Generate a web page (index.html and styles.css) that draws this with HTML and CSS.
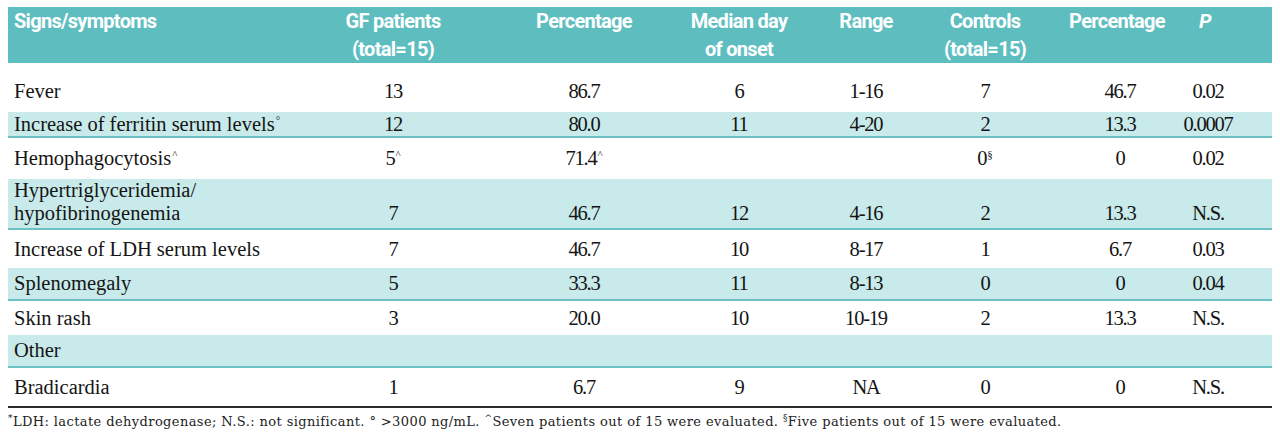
FILE: index.html
```html
<!DOCTYPE html>
<html lang="en">
<head>
<meta charset="utf-8">
<title>Signs and symptoms</title>
<link rel="stylesheet" href="styles.css">
</head>
<body>
<div class="page">
  <table class="data">
    <colgroup>
      <col class="w1"><col class="w2"><col class="w3"><col class="w4">
      <col class="w5"><col class="w6"><col class="w7"><col class="w8">
    </colgroup>
    <thead>
      <tr>
        <th class="lab">Signs/symptoms</th>
        <th>GF patients<br>(total=15)</th>
        <th class="c3">Percentage</th>
        <th>Median day<br>of onset</th>
        <th class="c5">Range</th>
        <th>Controls<br>(total=15)</th>
        <th class="c7">Percentage</th>
        <th class="c8"><i>P</i></th>
      </tr>
    </thead>
    <tbody>
      <tr class="first">
        <td class="lab">Fever</td><td>13</td><td class="c3">86.7</td><td>6</td><td class="c5">1-16</td><td>7</td><td class="c7">46.7</td><td class="c8">0.02</td>
      </tr>
      <tr class="sh r2">
        <td class="lab">Increase of ferritin serum levels<sup>°</sup></td><td>12</td><td class="c3">80.0</td><td>11</td><td class="c5">4-20</td><td>2</td><td class="c7">13.3</td><td class="c8">0.0007</td>
      </tr>
      <tr class="r3">
        <td class="lab">Hemophagocytosis<sup>^</sup></td><td>5<sup>^</sup></td><td class="c3">71.4<sup>^</sup></td><td></td><td class="c5"></td><td>0<sup>§</sup></td><td class="c7">0</td><td class="c8">0.02</td>
      </tr>
      <tr class="sh r4">
        <td class="lab">Hypertriglyceridemia/<br>hypofibrinogenemia</td><td>7</td><td class="c3">46.7</td><td>12</td><td class="c5">4-16</td><td>2</td><td class="c7">13.3</td><td class="c8">N.S.</td>
      </tr>
      <tr class="r5">
        <td class="lab">Increase of LDH serum levels</td><td>7</td><td class="c3">46.7</td><td>10</td><td class="c5">8-17</td><td>1</td><td class="c7">6.7</td><td class="c8">0.03</td>
      </tr>
      <tr class="sh r6">
        <td class="lab">Splenomegaly</td><td>5</td><td class="c3">33.3</td><td>11</td><td class="c5">8-13</td><td>0</td><td class="c7">0</td><td class="c8">0.04</td>
      </tr>
      <tr class="r7">
        <td class="lab">Skin rash</td><td>3</td><td class="c3">20.0</td><td>10</td><td class="c5">10-19</td><td>2</td><td class="c7">13.3</td><td class="c8">N.S.</td>
      </tr>
      <tr class="sh r8">
        <td class="lab">Other</td><td></td><td class="c3"></td><td></td><td class="c5"></td><td></td><td class="c7"></td><td class="c8"></td>
      </tr>
      <tr class="last">
        <td class="lab">Bradicardia</td><td>1</td><td class="c3">6.7</td><td>9</td><td class="c5">NA</td><td>0</td><td class="c7">0</td><td class="c8">N.S.</td>
      </tr>
    </tbody>
  </table>
  <p class="note"><sup>*</sup>LDH: lactate dehydrogenase; N.S.: not significant. ° &gt;3000 ng/mL. <sup>^</sup>Seven patients out of 15 were evaluated. <sup>§</sup>Five patients out of 15 were evaluated.</p>
</div>
</body>
</html>
```

FILE: styles.css
```css
html, body {
  margin: 0;
  padding: 0;
  background: #ffffff;
}

.page {
  padding: 7px 8px 0 8px;
}

.data {
  width: 1264px;
  table-layout: fixed;
  border-collapse: separate;
  border-spacing: 0;
  font-family: "Liberation Serif", "Times New Roman", serif;
  font-size: 20.5px;
  line-height: 23px;
  color: #151515;
}

.w1 { width: 322px; }
.w2 { width: 126px; }
.w3 { width: 234px; }
.w4 { width: 98px; }
.w5 { width: 152px; }
.w6 { width: 90px; }
.w7 { width: 150px; }
.w8 { width: 92px; }

.data th,
.data td {
  box-sizing: border-box;
  padding: 0;
  text-align: center;
  white-space: nowrap;
}

.data th {
  height: 54px;
  background: #5ebebf;
  color: #ffffff;
  font-family: Roboto, "Liberation Sans", sans-serif;
  font-weight: 700;
  font-size: 20px;
  letter-spacing: -0.7px;
  line-height: 28px;
  vertical-align: top;
  padding-top: 0;
}

.data th i {
  font-style: italic;
}

.data td {
  vertical-align: middle;
  letter-spacing: -1.2px;
}

.data .lab {
  text-align: left;
  padding-left: 6px;
  letter-spacing: 0;
}

.data th.lab {
  letter-spacing: -0.7px;
}

.data .c3 { padding-left: 22px; }
.data .c5 { padding-left: 4px; }
.data .c7 { padding-left: 30px; }
.data .c8 { padding-right: 36px; }

.data th.c7 { padding-left: 24px; }
.data th.c8 { padding-right: 42px; }

.sh td {
  background: #c8eaea;
  border-bottom: 2px solid #6cc2c2;
}

.first td { height: 49px; padding-top: 8px; }
.r2 td { height: 26px; }
.r3 td { height: 41px; }
.r4 td { height: 51px; vertical-align: bottom; padding-bottom: 3px; }
.r5 td { height: 38px; }
.r6 td { height: 33px; }
.r7 td { height: 34px; }
.r8 td { height: 33px; }
.last td { height: 40px; border-bottom: 2px solid #2a2a2a; }

.data sup {
  font-size: 11px;
  line-height: 0;
  vertical-align: 7px;
  margin-left: 1px;
  letter-spacing: 0;
}

.note {
  margin: 0;
  padding-top: 6px;
  font-family: "DejaVu Serif", "Liberation Serif", serif;
  font-size: 13px;
  letter-spacing: 0.4px;
  line-height: 16px;
  color: #222222;
  white-space: nowrap;
}

.note sup {
  font-size: 9px;
  line-height: 0;
  vertical-align: 5px;
}
```
